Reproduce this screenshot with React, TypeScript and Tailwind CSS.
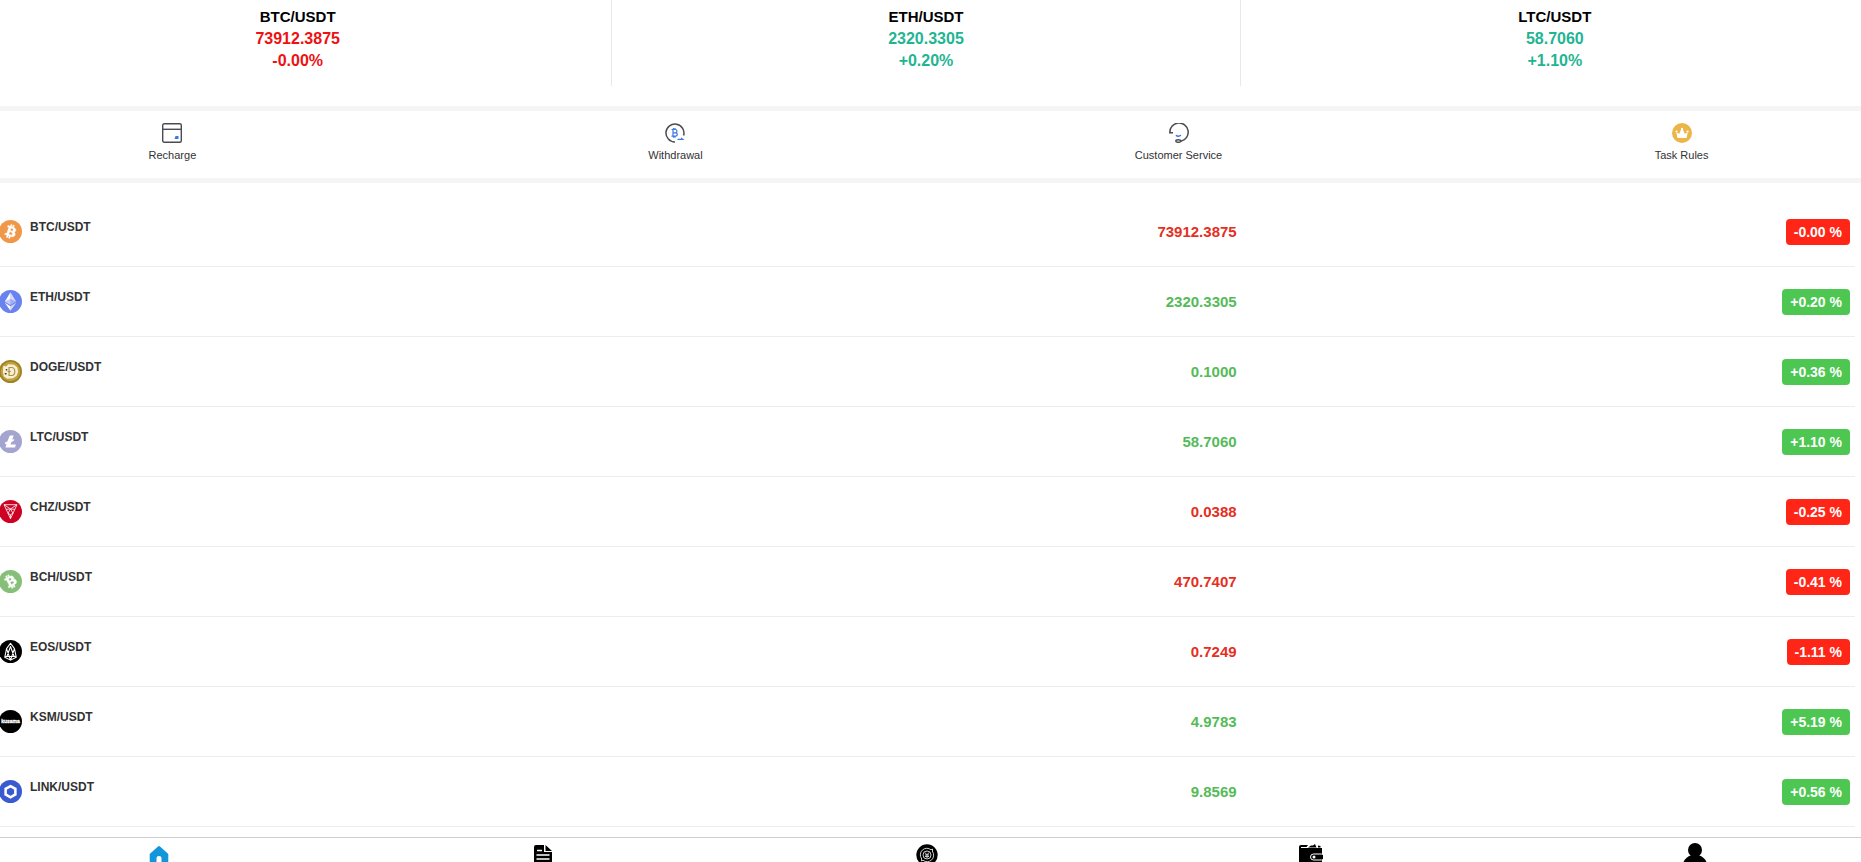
import type { ReactNode } from "react";

type Pair = {
  name: string;
  price: string;
  change: string;
  up: boolean;
  icon: ReactNode;
};

const tickers = [
  { name: "BTC/USDT", price: "73912.3875", change: "-0.00%", up: false },
  { name: "ETH/USDT", price: "2320.3305", change: "+0.20%", up: true },
  { name: "LTC/USDT", price: "58.7060", change: "+1.10%", up: true },
];

const Coin = ({ fill, children }: { fill: string; children: ReactNode }) => (
  <svg viewBox="0 0 32 32" className="h-[23px] w-[23px]" aria-hidden="true">
    <circle cx="16" cy="16" r="16" fill={fill} />
    {children}
  </svg>
);

const bitcoinPath =
  "M23.2 14c.3-2.1-1.3-3.2-3.4-4l.7-2.8-1.7-.4-.7 2.7-1.4-.3.7-2.7-1.7-.4-.7 2.8-1.1-.3-2.3-.6-.5 1.8s1.3.3 1.2.3c.7.2.8.6.8 1l-.8 3.2-1.1 4.5c-.1.2-.3.5-.8.4l-1.2-.3-.8 2 2.2.5 1.2.3-.7 2.8 1.7.4.7-2.8 1.4.4-.7 2.7 1.7.5.7-2.8c2.9.5 5 .3 6-2.4.7-2.1 0-3.3-1.6-4.1 1.1-.3 2-1 2.2-2.4zm-3.9 5.4c-.5 2.1-4.1 1-5.3.7l.9-3.8c1.2.3 5 .9 4.4 3.1zm.5-5.5c-.5 1.9-3.4 1-4.4.7l.9-3.4c1 .2 4.1.7 3.5 2.7z";

const pairs: Pair[] = [
  {
    name: "BTC/USDT",
    price: "73912.3875",
    change: "-0.00 %",
    up: false,
    icon: (
      <Coin fill="#f0984a">
        <path
          fill="#fff"
          stroke="#fff"
          strokeWidth=".6"
          transform="rotate(6 16 16)"
          d={bitcoinPath}
        />
      </Coin>
    ),
  },
  {
    name: "ETH/USDT",
    price: "2320.3305",
    change: "+0.20 %",
    up: true,
    icon: (
      <Coin fill="#6a82ee">
        <path fill="#fff" fillOpacity=".7" d="M16 3v9.6l8 3.6z" />
        <path fill="#fff" d="M16 3L8 16.2l8-3.6z" />
        <path fill="#fff" fillOpacity=".7" d="M16 22.5V29l8-11.200z" />
        <path fill="#fff" d="M16 29v-6.500l-8-4.700z" />
        <path fill="#fff" fillOpacity=".35" d="M16 21l8-4.800-8-3.600z" />
        <path fill="#fff" fillOpacity=".6" d="M8 16.200l8 4.800v-8.400z" />
      </Coin>
    ),
  },
  {
    name: "DOGE/USDT",
    price: "0.1000",
    change: "+0.36 %",
    up: true,
    icon: (
      <Coin fill="#a08226">
        <circle cx="16" cy="16" r="13.5" fill="#c2a23a" />
        <path
          fill="#f7f0d8"
          d="M6 8l4 1 3-3 8 .5 4.500 4 1 6-2 5.500-5 3.500-8 .5-5-3.500-1-6z"
        />
        <path
          fill="none"
          stroke="#b0913f"
          strokeWidth="1.600"
          d="M14 10.500h3.500c3 0 4.500 2.300 4.500 5.500s-1.500 5.500-4.500 5.500H14zM12 16h4.500"
        />
        <path fill="#4d3d1c" d="M9.500 12.500h2v2h-2zM8 18h2.500v2H8z" />
      </Coin>
    ),
  },
  {
    name: "LTC/USDT",
    price: "58.7060",
    change: "+1.10 %",
    up: true,
    icon: (
      <Coin fill="#a3a4d0">
        <path
          fill="#fff"
          d="M15 7.500h5.500l-2.200 6 3-1-.9 2.900-3.200 1.200-1 3.400h7.300l-1.200 4.500H9l1.600-5.500-2.600.9.900-2.900 2.700-1z"
        />
      </Coin>
    ),
  },
  {
    name: "CHZ/USDT",
    price: "0.0388",
    change: "-0.25 %",
    up: false,
    icon: (
      <Coin fill="#cd0124">
        <path
          fill="none"
          stroke="#fff"
          strokeWidth="1.100"
          strokeLinejoin="round"
          d="M7 6.500h18L16 26zM7 6.500l9 6 9-6M10 13l6-.5 6 .5M16 12.500l-3.500 6 3.500 2 3.500-2zM16 20.500V26"
        />
      </Coin>
    ),
  },
  {
    name: "BCH/USDT",
    price: "470.7407",
    change: "-0.41 %",
    up: false,
    icon: (
      <Coin fill="#86c078">
        <path
          fill="#fff"
          stroke="#fff"
          strokeWidth=".7"
          transform="rotate(-42 16 16)"
          d={bitcoinPath}
        />
      </Coin>
    ),
  },
  {
    name: "EOS/USDT",
    price: "0.7249",
    change: "-1.11 %",
    up: false,
    icon: (
      <Coin fill="#000">
        <path
          fill="none"
          stroke="#fff"
          strokeWidth="1.500"
          strokeLinejoin="round"
          d="M16 4.500l-5.500 7.500L8 24l8 4 8-4-2.500-12zM16 9l-5 14h10zM10.500 12L16 28l5.500-16M8 24l4-2M24 24l-4-2"
        />
      </Coin>
    ),
  },
  {
    name: "KSM/USDT",
    price: "4.9783",
    change: "+5.19 %",
    up: true,
    icon: (
      <Coin fill="#000">
        <text
          x="16"
          y="18"
          textAnchor="middle"
          fontSize="7"
          fontWeight="700"
          fill="#fff"
          stroke="#fff"
          strokeWidth=".4"
        >
          kusama
        </text>
      </Coin>
    ),
  },
  {
    name: "LINK/USDT",
    price: "9.8569",
    change: "+0.56 %",
    up: true,
    icon: (
      <Coin fill="#3a5bd0">
        <path
          fill="none"
          stroke="#fff"
          strokeWidth="3.500"
          d="M16 8.500l6.800 3.800v7.800L16 24l-6.800-3.900v-7.800z"
        />
      </Coin>
    ),
  },
];

const actions = [
  {
    label: "Recharge",
    icon: (
      <svg viewBox="0 0 20 20" className="h-5 w-5" aria-hidden="true">
        <g fill="none" stroke="#4b4b52" strokeWidth="1.400">
          <rect x=".7" y=".7" width="18.600" height="18.600" rx="1.500" />
          <path d="M.7 6.300h18.600" />
        </g>
        <path fill="#3f78e0" d="M13.500 13h3v3h-4z" />
      </svg>
    ),
  },
  {
    label: "Withdrawal",
    icon: (
      <svg viewBox="0 0 20 20" className="h-5 w-5" aria-hidden="true">
        <path
          fill="none"
          stroke="#4b4b52"
          strokeWidth="1.500"
          d="M10 19A9 9 0 1 1 18.600 12.500"
        />
        <path
          fill="none"
          stroke="#3f78e0"
          strokeWidth="1.200"
          d="M6.500 6.500h3.800a1.600 1.600 0 0 1 0 3.300H8h2.600a1.700 1.700 0 0 1 0 3.400H6.500M8 6.500v6.700M8.500 5v1.500M10 5v1.500M8.500 13.200v1.500M10 13.200v1.500"
        />
        <path fill="#3f78e0" d="M12.500 15.700h3.500v-1.500l3.500 2.800h-7z" />
      </svg>
    ),
  },
  {
    label: "Customer Service",
    icon: (
      <svg viewBox="0 0 20 20" className="h-5 w-5" aria-hidden="true">
        <g fill="none" stroke="#4b4b52" strokeWidth="1.500">
          <path d="M4 9.700H.8A9.200 9.200 0 1 1 12 18.200" />
          <ellipse cx="9.300" cy="18" rx="2.500" ry="1.300" />
        </g>
        <path
          fill="none"
          stroke="#3f6fe8"
          strokeWidth="1.400"
          d="M6.800 12.300q2.700 1.800 5.200 0"
        />
      </svg>
    ),
  },
  {
    label: "Task Rules",
    icon: (
      <svg viewBox="0 0 20 20" className="h-5 w-5" aria-hidden="true">
        <circle cx="10" cy="10" r="10" fill="#ebb548" />
        <path
          fill="#fff"
          d="M5.300 14.500L4.300 9.500l3 1.300L9.300 6h1.400l2 4.800 3-1.300-1 5q-.2.500-.7.500H6q-.5 0-.7-.5z"
        />
        <g fill="#fff">
          <circle cx="10" cy="6" r="1.200" />
          <circle cx="4.500" cy="8.500" r="1.100" />
          <circle cx="15.500" cy="8.500" r="1.100" />
        </g>
      </svg>
    ),
  },
];

const tabs = [
  {
    label: "Home",
    icon: (
      <svg viewBox="0 0 24 24" className="h-6 w-6" aria-hidden="true">
        <path
          fill="#1296db"
          d="M11 3.500q1-.8 2 0l8.300 7.500v11q0 2-2 2H14.500V15q0-2-2.500-2t-2.500 2v9H4.700q-2 0-2-2V11z"
        />
      </svg>
    ),
  },
  {
    label: "Orders",
    icon: (
      <svg viewBox="0 0 24 24" className="h-6 w-6" aria-hidden="true">
        <path d="M5 2h8v7h8v15H3V4q0-2 2-2z" />
        <path d="M14.500 2L21 8h-6.500z" />
        <path
          stroke="#fff"
          strokeWidth="1.300"
          d="M6 7.500h5M5.500 12h13M5.500 16h13"
        />
      </svg>
    ),
  },
  {
    label: "Trade",
    icon: (
      <svg viewBox="0 0 24 24" className="h-6 w-6" aria-hidden="true">
        <circle cx="12" cy="12" r="10.700" />
        <g fill="none" stroke="#ccc" strokeWidth="1">
          <path d="M6.500 15.500a6.500 6.500 0 0 1 9.500-8.700l1.500-.8v3M17.500 8.500A6.500 6.500 0 0 1 8 17.200l-1.500.8v-3" />
          <circle cx="12" cy="12" r="4" />
          <path d="M10 9.500l2 2.500 2-2.500M10 12h4M10 13.500h4M12 12v3" />
        </g>
      </svg>
    ),
  },
  {
    label: "Assets",
    icon: (
      <svg viewBox="0 0 24 24" className="h-6 w-6" aria-hidden="true">
        <path d="M0 4q0-2 2-2h7L7.500 4H2v1h21v19H0z" />
        <path d="M9 4.500L12 2.500h2L16 1l1.500 3.500zM19 2.500l2.500.5v1.500h-2.500z" />
        <rect x="11.500" y="11" width="14" height="6" rx="3" stroke="#fff" />
        <circle cx="15" cy="14" r="1.500" fill="#fff" />
      </svg>
    ),
  },
  {
    label: "Mine",
    icon: (
      <svg viewBox="0 0 24 24" className="h-6 w-6" aria-hidden="true">
        <circle cx="12" cy="7" r="7" />
        <path d="M0 21q1-6 8.500-9h7q7.500 3 8.500 9v3H0z" />
      </svg>
    ),
  },
];

const Tickers = () => (
  <section className="-mr-2 -ml-4 grid h-[106px] shrink-0 grid-cols-3 pb-5">
    {tickers.map((t) => (
      <div
        key={t.name}
        className="border-r border-[#e8e8e8] pt-[5px] text-center font-bold last:border-r-0"
      >
        <h2 className="text-[15px] leading-6">{t.name}</h2>
        <div className={t.up ? "text-[#1fb592]" : "text-[#ee1111]"}>
          <p className="text-base leading-5">{t.price}</p>
          <p className="text-base leading-6">{t.change}</p>
        </div>
      </div>
    ))}
  </section>
);

const Actions = () => (
  <section className="flex h-[77px] shrink-0 justify-between border-y-[5px] border-[#f5f5f5] pt-3 pr-[7px]">
    {actions.map((a) => (
      <div key={a.label} className="flex w-[18.6%] justify-center">
        <button
          type="button"
          className="flex cursor-pointer flex-col items-center gap-1 self-start text-[11px] leading-4 whitespace-nowrap text-[#323233]"
        >
          {a.icon}
          {a.label}
        </button>
      </div>
    ))}
  </section>
);

const Row = ({ pair }: { pair: Pair }) => (
  <li className="grid h-[70px] grid-cols-3 items-center border-b border-[#ebedf0] font-bold">
    <div className="-ml-px flex gap-2">
      {pair.icon}
      <span className="text-xs leading-[14px] text-[#323233]">{pair.name}</span>
    </div>
    <span
      className={`text-right text-[15px] leading-5 ${
        pair.up ? "text-[#55bb58]" : "text-[#e52f22]"
      }`}
    >
      {pair.price}
    </span>
    <div className="flex justify-end pr-[5px]">
      <span
        className={`rounded-[4px] px-2 text-sm leading-[26px] text-white ${
          pair.up ? "bg-[#4dc751]" : "bg-[#ff2618]"
        }`}
      >
        {pair.change}
      </span>
    </div>
  </li>
);

const App = () => {
  return (
    <div className="flex h-screen flex-col overflow-hidden bg-white font-['Liberation_Sans',Arial,sans-serif] text-black">
      <Tickers />
      <Actions />
      <ul className="mt-3.5 mr-1.5 mb-2.5 shrink-0">
        {pairs.map((pair) => (
          <Row key={pair.name} pair={pair} />
        ))}
      </ul>
      <nav className="flex shrink-0 justify-between border-t border-[#cfcfcf] bg-white pt-[5px] pr-[7px]">
        {tabs.map((tab) => (
          <div key={tab.label} className="flex w-[17.2%] justify-center">
            <button
              type="button"
              aria-label={tab.label}
              className="cursor-pointer"
            >
              {tab.icon}
            </button>
          </div>
        ))}
      </nav>
    </div>
  );
};

export default App;
